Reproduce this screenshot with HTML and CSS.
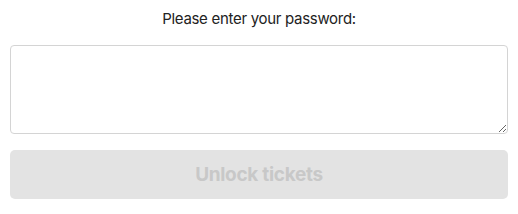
FILE: index.html
```html
<!DOCTYPE html>
<html lang="en">
<head>
  <meta charset="UTF-8">
  <meta name="viewport" content="width=device-width, initial-scale=1.0">
  <title>Unlock tickets</title>
  <link rel="stylesheet" href="styles.css">
</head>
<body>
  <div class="unlock-form">
    <label for="password" class="prompt">Please enter your password:</label>
    <textarea id="password"></textarea>
    <button class="unlock-btn" disabled>Unlock tickets</button>
  </div>
</body>
</html>
```

FILE: styles.css
```css
body {
  margin: 0;
  padding: 8px 10px;
  font-family: Inter, "Noto Sans", sans-serif;
  background-color: #ffffff;
}

.unlock-form {
  display: flex;
  flex-direction: column;
}

.prompt {
  text-align: center;
  font-size: 15px;
  letter-spacing: -0.3px;
  line-height: 22px;
  color: #222;
  margin-bottom: 15px;
}

textarea {
  height: 89px;
  box-sizing: border-box;
  border: 1px solid #d4d4d4;
  border-radius: 4px;
  padding: 8px;
  font-family: inherit;
  font-size: 16px;
  resize: vertical;
  margin: 0 0 16px 0;
}

.unlock-btn {
  height: 49px;
  border: none;
  border-radius: 5px;
  background-color: #e3e3e3;
  color: #c8c8c8;
  font-family: inherit;
  font-size: 19px;
  letter-spacing: -0.3px;
  font-weight: 700;
}
```
